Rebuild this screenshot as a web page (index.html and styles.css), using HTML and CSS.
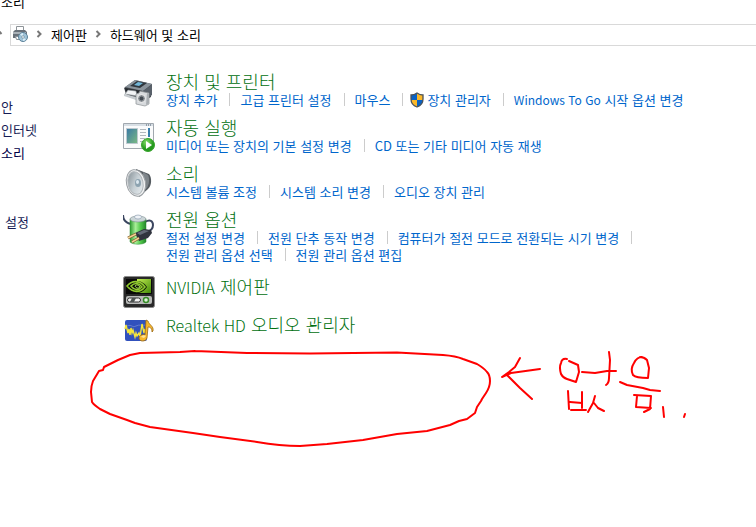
FILE: index.html
```html
<!DOCTYPE html>
<html lang="ko">
<head>
	<meta charset="utf-8">
	<title>하드웨어 및 소리</title>
	<link rel="stylesheet" href="styles.css">
</head>
<body>
	<div class="titlebar">소리</div>

	<div class="toolbar">
		<svg class="up" viewBox="0 0 10 20"><path d="M-2 7L1.500 11" transform="translate(0 -1)"/></svg>
		<div class="address">
			<svg class="addressIcon" viewBox="0 0 16 16">
				<path fill="#fff" stroke="#8e9499" d="M4.500 5V.5h7V5"/>
				<path fill="#687079" d="M1 6l2-2h10l2 2v4l-1 2H1z"/>
				<path fill="#a9b1b8" d="M1 6h13v2H1z"/>
				<path fill="#fff" stroke="#8b9299" d="M3.500 10.500h4v3h-3z"/>
				<circle cx="11" cy="11" r="4.500" fill="#9fc3d8" stroke="#5c8198"/>
				<path fill="#d9eef8" d="M11 11L8 8l3-1zM11 11l3 3-3 1z"/>
				<circle cx="11" cy="11" r="1.300" fill="#fff" stroke="#58788c" stroke-width=".6"/>
			</svg>
			<svg class="arrow" viewBox="0 0 6 8"><path d="M1.500 1L4.500 4 1.500 7"/></svg>
			<a href="#">제어판</a>
			<svg class="arrow" viewBox="0 0 6 8"><path d="M1.500 1L4.500 4 1.500 7"/></svg>
			<a href="#">하드웨어 및 소리</a>
		</div>
	</div>

	<div class="wrapper">
		<ul class="side">
			<li><a href="#">안</a></li>
			<li><a href="#">인터넷</a></li>
			<li class="active"><a href="#">소리</a></li>
			<li class="far"><a href="#">설정</a></li>
		</ul>

		<div class="content">
			<div class="item">
				<svg class="icon" viewBox="0 0 32 32">
					<path fill="#4a4f55" d="M1 12l11-8 17 4-1 13-9 5L3 18z"/>
					<path fill="#8b949c" d="M2 11l10-7 17 4-9 7z"/>
					<path fill="#30373e" d="M7 10l7-5 10 2-7 5z"/>
					<path fill="#71b6d8" d="M11 9l4-3 5 1-4 3z"/>
					<path fill="#272b30" d="M2 12l17 3v6L3 17z"/>
					<path fill="#59616a" d="M20 15l9-6v10l-8 5z"/>
					<path fill="#f1f3f5" stroke="#858b91" stroke-width=".6" d="M5 14l8 1 1 5-12-2z"/>
					<path fill="#c7ccd0" d="M1 18l12 3v3L1 20z"/>
					<path fill="#d7dadd" stroke="#8b9094" stroke-width=".7" d="M13 18l3-1 1-2 4 1 5 1v11l-4 2-9-2z"/>
					<path fill="#a8adb1" d="M24 17l2 1v9l-3 2z"/>
					<circle cx="18.500" cy="22.500" r="4" fill="#8b9196" stroke="#f4f4f4"/>
					<circle cx="18.500" cy="22.500" r="2" fill="#434a52"/>
				</svg>
				<div class="text">
					<h2><a href="#">장치 및 프린터</a></h2>
					<ul class="links">
						<li><a href="#">장치 추가</a></li>
						<li><a href="#">고급 프린터 설정</a></li>
						<li><a href="#">마우스</a></li>
						<li>
							<svg class="shield" viewBox="0 0 14 16">
								<path fill="#fbb829" d="M7 1c2 1.500 4 2 6 2v4c0 4-3 7-6 8-3-1-6-4-6-8V3c2 0 4-.5 6-2z"/>
								<path fill="#0a62c4" d="M1 3c2 0 4-.5 6-2v7H1zM7 8h6c-.5 4-3 6-6 7z"/>
								<path fill="none" stroke="#4b5259" stroke-width="1.300" d="M7 1c2 1.500 4 2 6 2v4c0 4-3 7-6 8-3-1-6-4-6-8V3c2 0 4-.5 6-2z"/>
							</svg>
							<a href="#">장치 관리자</a>
						</li>
						<li><a href="#"><span class="en">Windows To Go</span> 시작 옵션 변경</a></li>
					</ul>
				</div>
			</div>

			<div class="item">
				<svg class="icon" viewBox="0 0 32 32">
					<defs>
						<linearGradient id="screen" x2="1" y2="1"><stop stop-color="#3978a5"/><stop offset="1" stop-color="#7bba83"/></linearGradient>
						<radialGradient id="play" cx=".4" cy=".3"><stop stop-color="#8be06f"/><stop offset="1" stop-color="#24991e"/></radialGradient>
					</defs>
					<path fill="#fafbfc" stroke="#a1a8af" d="M.5 1.500h30v25H.5z"/>
					<path fill="#d8dfe5" d="M1 2h29v2H1z"/>
					<path stroke="#4d5e70" stroke-dasharray="1 1" d="M23 3h6"/>
					<path fill="url(#screen)" stroke="#bdc9d0" d="M3.500 6.500h11v15h-11z"/>
					<path stroke="#b1b8be" d="M17 7.500h6M17 10.500h6M17 13.500h6M17 16.500h5M17 19.500h3"/>
					<path fill="#397eae" d="M25 6h2v9h-2z"/>
					<circle cx="25" cy="23" r="6.500" fill="url(#play)" stroke="#3aa52e"/>
					<path fill="#fff" d="M23 19l6 4-6 4z"/>
				</svg>
				<div class="text">
					<h2><a href="#">자동 실행</a></h2>
					<ul class="links">
						<li><a href="#">미디어 또는 장치의 기본 설정 변경</a></li>
						<li><a href="#">CD 또는 기타 미디어 자동 재생</a></li>
					</ul>
				</div>
			</div>

			<div class="item">
				<svg class="icon" viewBox="0 0 32 32">
					<defs>
						<linearGradient id="cone" x2="1" y2="1"><stop stop-color="#7f898f"/><stop offset=".5" stop-color="#c6cfd4"/><stop offset="1" stop-color="#edf1f3"/></linearGradient>
					</defs>
					<path fill="#555b60" d="M13 1l13 5c3 3 3 12-1 15l-9 8z"/>
					<path fill="#7e858a" d="M20 4l5 3c2 4 1 9-1 13l-4 3z"/>
					<ellipse cx="13" cy="15" rx="9.500" ry="13.500" fill="#f2f3f4" stroke="#9ba0a4" transform="rotate(-12 13 15)"/>
					<ellipse cx="12.500" cy="15" rx="7.500" ry="11.500" fill="url(#cone)" stroke="#b2b8bc" transform="rotate(-12 12.500 15)"/>
					<ellipse cx="15" cy="15" rx="3" ry="4" fill="#8da3b0"/>
					<ellipse cx="14.500" cy="14" rx="1.500" ry="2" fill="#dce8ef"/>
				</svg>
				<div class="text">
					<h2><a href="#">소리</a></h2>
					<ul class="links">
						<li><a href="#">시스템 볼륨 조정</a></li>
						<li><a href="#">시스템 소리 변경</a></li>
						<li><a href="#">오디오 장치 관리</a></li>
					</ul>
				</div>
			</div>

			<div class="item">
				<svg class="icon" viewBox="0 0 32 32">
					<defs>
						<linearGradient id="battery"><stop stop-color="#2d9b30"/><stop offset=".35" stop-color="#a8ef98"/><stop offset=".65" stop-color="#53ca4c"/><stop offset="1" stop-color="#23862a"/></linearGradient>
					</defs>
					<path fill="none" stroke="#3b4660" stroke-width="2" d="M0 1c0 5 3 8 8 9M22 8c5-3 8-1 8 3s-3 6-6 7"/>
					<path fill="url(#battery)" stroke="#2b8b30" stroke-width=".5" d="M7 5h16v23c-3 3-13 3-16 0z"/>
					<ellipse cx="15" cy="5" rx="8" ry="3" fill="#cbd5d7" stroke="#7c8c90" stroke-width=".6"/>
					<ellipse cx="15" cy="3" rx="3.500" ry="2" fill="#eef2f6" stroke="#8293a8" stroke-width=".6"/>
					<path fill="#30343e" d="M12 19l9-4 7 1 1 3-4 5-9 3z"/>
					<path fill="#646b78" d="M14 19l7-3 5 1-9 4z"/>
					<path stroke="#7c5a2c" stroke-width="3" d="M13 20l-8 4M16 24l-7 4"/>
					<path stroke="#f1d091" stroke-width="1.500" d="M13 20l-8 4M16 24l-7 4"/>
				</svg>
				<div class="text">
					<h2><a href="#">전원 옵션</a></h2>
					<ul class="links">
						<li><a href="#">절전 설정 변경</a></li>
						<li><a href="#">전원 단추 동작 변경</a></li>
						<li><a href="#">컴퓨터가 절전 모드로 전환되는 시기 변경</a></li>
						<li><a href="#">전원 관리 옵션 선택</a></li>
						<li><a href="#">전원 관리 옵션 편집</a></li>
					</ul>
				</div>
			</div>

			<div class="item plain">
				<svg class="icon" viewBox="0 0 32 32">
					<defs>
						<linearGradient id="green" x2="1" y2="1"><stop stop-color="#c2ed52"/><stop offset="1" stop-color="#438b08"/></linearGradient>
					</defs>
					<rect x=".5" y=".5" width="31" height="31" rx="2" fill="#292929" stroke="#8b8b8b"/>
					<path fill="#090909" d="M3 3h26v15H3z"/>
					<path fill="url(#green)" d="M14 3h14v14H14z"/>
					<path fill="#0a1404" d="M13 5c6 0 9 3 11 6-3 4-6 6-11 6z"/>
					<path fill="none" stroke="#91cb2e" stroke-width="1.600" d="M4 10c5-6 13-6 18 1-5 6-12 6-18-1zM8 10c4-4 8-3 11 1-4 4-8 3-11-1z"/>
					<path fill="none" stroke="#b6e765" d="M12 10c2-2 3-1 5 1-2 2-4 1-5-1z"/>
					<rect x="3" y="20" width="26" height="8" rx="2" fill="#b9bbb9"/>
					<rect x="4.500" y="22" width="13" height="4" rx="2" fill="#f4f4f4" stroke="#333"/>
					<path fill="#4e5351" d="M9 22h4l-2 4H7z"/>
					<circle cx="23" cy="24" r="2.500" fill="#dff5d8" stroke="#368c28" stroke-width="1.500"/>
				</svg>
				<div class="text">
					<h2><a href="#"><span class="en">NVIDIA</span> 제어판</a></h2>
				</div>
			</div>

			<div class="item plain">
				<svg class="icon" viewBox="0 0 32 32">
					<rect x="2" y="6" width="22" height="21" rx="2" fill="#3151bd"/>
					<path fill="none" stroke="#8799d7" stroke-width=".6" d="M4 12c5-2 5 2 9 0s5 0 9-1"/>
					<path fill="none" stroke="#f5e63d" stroke-width="1.400" d="M2 15l1-4 2 8 1-4 1 6 1-7 1 5 1-3 2 7 1-4 1 3 2-3 1 4 2-13 2 9 1-4 1 4"/>
					<path fill="#f7b62b" stroke="#986717" stroke-width=".8" d="M23 6l2 1c1 4 6 5 5 10l-1 1c0-4-2-5-4-5l-1 11c-1 4-8 4-8 0 0-3 4-4 6-3z"/>
					<path fill="#ffe394" d="M18 23c1-2 4-2 5-1l-2 2z"/>
				</svg>
				<div class="text">
					<h2><a href="#"><span class="en">Realtek HD</span> 오디오 관리자</a></h2>
				</div>
			</div>
		</div>
	</div>

	<!-- red pen marks over the empty area -->
	<svg class="pen" viewBox="80 340 620 110" role="img" aria-label="없음..">
		<path d="M195 351L180 352 140 353 130 355 118 360 104 367 103 370 99 371 93 381Q91 386 91 392L92 402Q94 405 100 409L110 414 127 420 135 423 150 427 193 433 220 437 257 442Q280 446 300 446L327 444 363 440 397 434 427 431 450 425 459 421 467 419 475 413 477 407 481 401 482 399 486 393Q490 387 490 381 490 375 487 372 484 368 477 364L463 359Q456 356 443 355L397 352.500 310 353.500 247 353 195 351"/>
		<path d="M520 358L515 367 509 372 502 377 511 373 540 369M507 375L520 388 532 399"/>
		<path d="M567 359Q562 358 561 363 559 367 561 374 563 378 567 379L576 382 579 372 578 365 569 361"/>
		<path d="M582 372L595 373 607 371 616 371M609 352L610 360 609 378Q609 383 606 385"/>
		<path d="M642 357Q637 357 634 363 630 369 633 375 636 378 648 378L649 368 647 360Q644 357 640 357"/>
		<path d="M620 382L627 385 643 388 650 390 660 391"/>
		<path d="M568 391L569 409M582 392L582 408M570 402L582 403M571 410L586 410M595 396L593 403 588 412M594 403L598 408 604 411"/>
		<path d="M637 396L636 407 651 408M634 395L651 396 650 409 644 412M663 407L664 417M685 414L684 417"/>
	</svg>
</body>
</html>
```
FILE: styles.css
```css
*{
	padding:0;
	margin:0;
	box-sizing: border-box;
}
body{
	background-color: #fff;
	color:#000;
	font-family: "Noto Sans CJK KR", sans-serif;
	font-size:13px;
	line-height: 17px;
	overflow: hidden;
}
ul{
	list-style: none;
}
a{
	color:inherit;
	text-decoration: none;
}
svg{
	display: block;
	flex:none;
}
.en{
	font-size:12px;
}

.titlebar{
	height:24px;
	padding-left:1px;
	margin-top:-7px;
}
.toolbar{
	display: flex;
	margin-top:7px;
}
.up{
	width:10px;
	height:20px;
	fill:none;
	stroke:#777;
	stroke-width:2;
}
.address{
	flex:1;
	display: flex;
	align-items: center;
	height:22px;
	padding-bottom:2px;
	border:1px solid #d9d9d9;
	border-right:0;
}
.addressIcon{
	width:16px;
	height:16px;
	margin-left:1px;
}
.arrow{
	width:6px;
	height:8px;
	margin:0 9px 0 8px;
	fill:none;
	stroke:#777;
	stroke-width:2;
}

.wrapper{
	display: flex;
	padding-top:25px;
}
.side{
	flex:none;
	width:123px;
	padding:27px 0 0 1px;
	color:#151c55;
}
.side li{
	margin-bottom:6px;
}
.side .active{
	color:#000046;
}
.side .far{
	margin-top:52px;
	padding-left:4px;
}

.content{
	flex:1;
	min-width:0;
}
.item{
	display: flex;
	gap:11px;
	margin-bottom:9px;
}
.icon{
	width:32px;
	height:32px;
	margin-top:5px;
}
.plain{
	margin-bottom:6px;
}
.plain .icon{
	margin-top:0;
}
.item:not(.plain) + .plain{
	margin-top:13px;
}
h2{
	font-size:18px;
	font-weight: 300;
	line-height: 20px;
	color:#00700f;
}
h2 .en{
	font-size:16px;
}
.links{
	display: flex;
	flex-wrap: wrap;
	max-width:560px;
	color:#0066cc;
}
.links li{
	display: flex;
	align-items: center;
	white-space: nowrap;
}
.links li:not(:last-child)::after{
	content:"";
	width:1px;
	height:13px;
	margin:0 10px 0 12px;
	background-color: #ccc;
}
.shield{
	width:14px;
	height:16px;
	margin:0 3px 0 -3px;
}

.pen{
	position: absolute;
	left:80px;
	top:340px;
	width:620px;
	height:110px;
	fill:none;
	stroke:#f00;
	stroke-width:2;
	stroke-linecap: round;
	stroke-linejoin: round;
	pointer-events: none;
}
```
